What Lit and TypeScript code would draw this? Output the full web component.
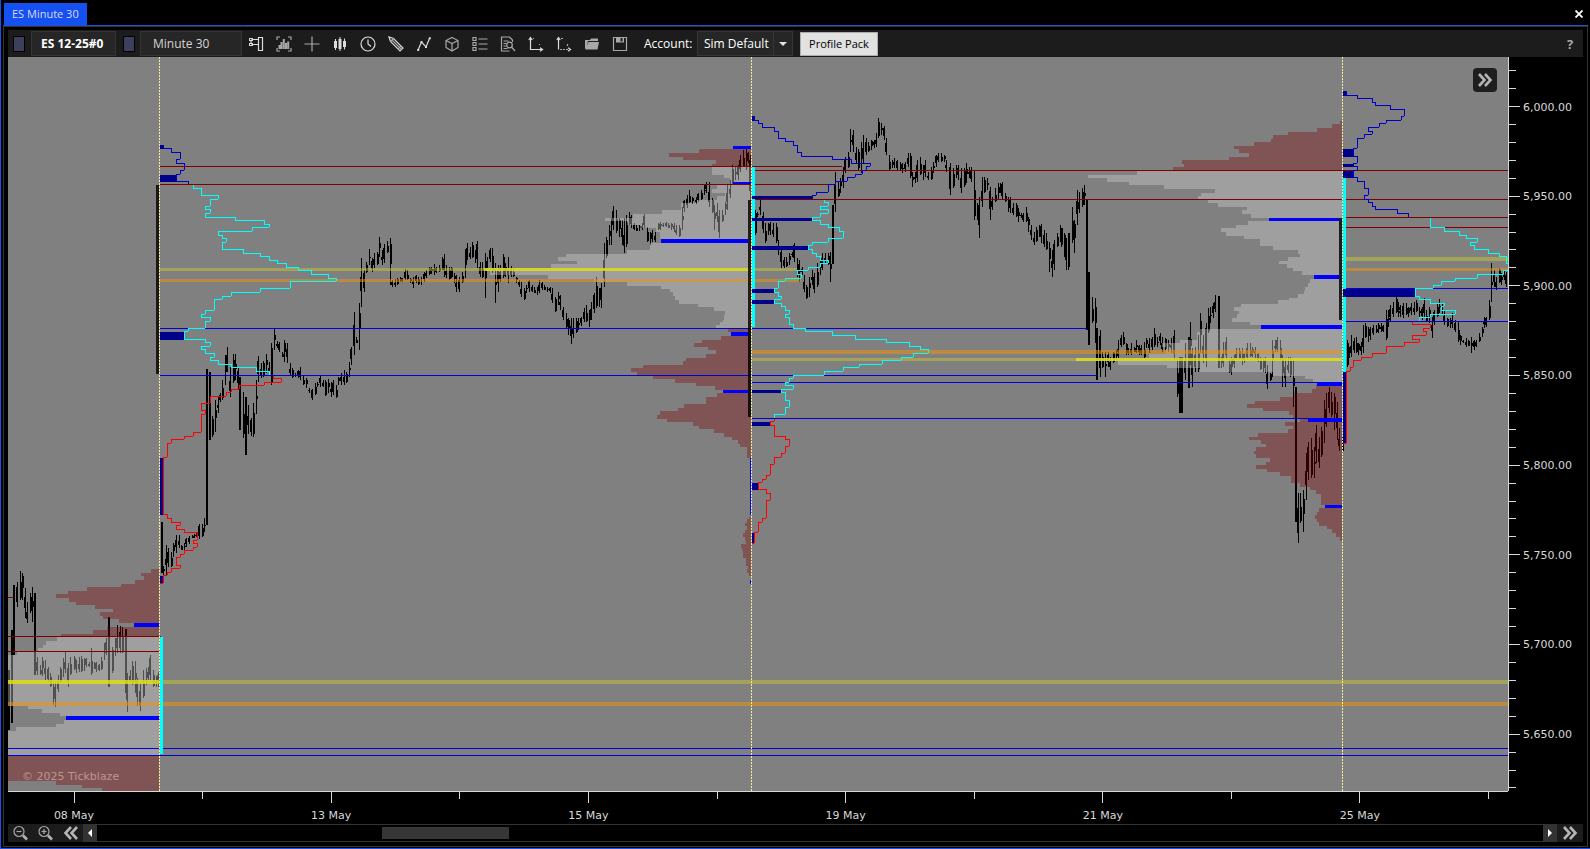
import { LitElement, html, svg, css } from "lit";
import { customElement } from "lit/decorators.js";

/* ---------- chart geometry ---------- */

// The plot is described in window units; traced series use thirds of a unit,
// relative to the origin of their own session block.
const PLOT = { x: 8, y: 57, w: 1500, h: 734 };
const priceY = (p: number) => 106.5 + (6000 - p) * 1.7933;

type Rect = [number, number, number, number];
type Trace = { x: number; y: number; d: string };
type Bars = { x: number; y: number; d: string };

const BARS: Bars[] = [
  { x: 0, y: 550, d: "25,360,540 35,240,520 43,105,315 51,95,170 60,63,150 67,70,150 75,115,205 82,155,220 90,130,190 97,110,215 105,130,375 112,320,375 120,345,375 128,320,378 137,330,390 145,350,395 152,370,410 160,395,465 167,395,470 175,375,425 182,350,400 190,325,380 197,305,370 205,340,410 212,320,375 222,318,360 229,330,370 237,320,365 245,318,365 252,325,362 260,325,350 268,335,350 275,295,375 283,335,358 290,335,365 298,342,362 305,320,360 313,280,330 320,265,315 328,200,412 337,290,368 345,265,318 353,225,310 360,228,310 368,232,310 376,237,430 382,370,485 390,360,395 397,333,405 405,333,430 413,385,468 421,400,482 430,360,445 438,355,405 445,350,390 452,315,390 460,360,412 468,378,412 476,365,410" },
  { x: 150, y: 330, d: "33,575,728 41,708,735 49,645,735 56,655,712 64,665,710 71,640,680 79,615,670 87,615,655 95,645,660 102,640,660 110,625,650 118,618,642 126,615,625 133,612,625 140,608,622 148,582,628 156,582,622 164,565,605 171,117,585 180,125,330 187,258,322 196,210,305 204,200,250 212,190,215 218,150,210 225,75,165 232,50,125 241,110,200 249,72,160 257,72,150 265,115,180 272,140,300 280,185,325 287,200,375 295,225,312 303,265,318 311,220,320 318,150,252 326,78,155 334,100,145 341,92,140 349,72,130 357,95,135" },
  { x: 150, y: 130, d: "365,640,765 373,595,660 381,632,655 388,635,665 396,665,680 404,630,695 412,640,700 420,698,735 428,715,745 436,730,740 444,720,745 452,710,750 460,737,765 470,745,775 478,775,790 487,778,810 495,760,795 503,755,770 511,735,770 519,750,770 527,750,798 535,748,790 543,755,800 551,750,795 559,765,803 566,740,765 574,730,765 582,720,765 590,725,760 598,695,740 604,650,705 613,545,675 620,620,640 628,520,660 635,385,532 643,420,485 650,395,430 658,357,405 666,385,425 674,370,415 682,365,405 688,320,380 696,360,405 704,342,400 712,332,370 720,325,465 728,450,470 735,447,470 743,445,465 750,440,455 758,445,455 765,418,450 773,420,450 781,445,460 790,440,475 798,435,460 806,440,465 814,440,465 822,425,455 830,420,445 838,410,435 845,410,432 852,402,435 860,410,430 868,405,425 876,380,420 883,373,440 890,405,445 898,410,450" },
  { x: 450, y: 130, d: "5,410,445 13,430,460 20,435,485 28,440,485 36,425,458 45,358,445 52,340,390 60,350,388 67,337,385 75,360,400 82,333,415 90,395,440 98,395,445 106,368,505 113,380,415 121,355,395 128,355,430 136,400,520 144,405,485 152,405,455 160,372,445 167,400,440 175,380,460 183,408,440 191,415,440 200,440,458 208,450,470 215,455,500 222,475,510 230,465,490 238,450,485 247,465,485 254,470,490 261,470,495 268,450,490 276,455,480 284,465,480 292,470,485 300,470,490 308,475,520 316,500,545 324,487,525 332,495,540 340,530,570 348,550,595 356,565,615 363,565,643 370,565,625 378,565,610 386,565,600 394,560,588 402,535,575 410,525,575 418,540,590 425,515,570 433,490,550 440,440,535 448,475,530 455,460,535 463,340,470 470,320,385 478,285,345 484,265,345 491,228,300 500,240,310 508,265,320 516,270,345 524,265,370 530,255,350 537,245,285 545,255,295 553,280,300 560,285,302 568,285,302 576,280,300 584,253,295 592,290,335 600,305,345 608,300,335 616,305,335 624,280,300 632,275,300 640,278,290 648,276,292 656,278,295 664,280,300 672,280,305 680,285,315 688,285,322 696,230,300 704,210,245 712,195,235 718,180,218 728,200,222 738,200,222 746,190,215 754,180,210 762,165,195 770,157,190 778,157,230 786,205,250 794,225,300 802,220,275 809,240,325 817,240,275 825,215,255 833,165,240 841,150,205 848,105,165 856,110,150 864,105,150 872,75,125 880,60,110 888,58,120 894,65,100 900,75,210" },
  { x: 740, y: 100, d: "45,330,405 53,335,350 61,300,345 69,335,400 77,370,430 84,370,405 92,365,405 100,370,410 108,370,430 116,420,465 124,450,505 132,470,505 140,470,500 148,460,495 156,455,470 163,430,485 171,475,530 179,480,545 186,500,525 193,525,575 200,555,597 208,530,590 216,510,555 224,520,580 232,490,560 240,480,525 248,460,510 256,458,490 264,458,495 272,455,545 280,315,492 287,215,335 294,245,290 302,235,280 309,200,265 316,170,220 324,155,205 332,88,155 340,90,155 348,140,190 355,148,210 363,125,220 370,105,190 378,115,165 386,125,155 394,120,150 402,120,145 409,100,140 416,55,115 424,70,105 432,78,120 440,115,165 448,165,210 456,180,205 464,175,205 472,180,210 480,185,210 488,190,220 496,185,215 504,158,200 510,160,235 517,215,260 525,215,250 533,180,245 541,170,225 549,195,240 557,180,230 565,215,240 573,200,240 580,185,220 588,165,200 596,160,185 604,158,185 612,165,185 620,180,215 631,190,285 640,205,265 648,195,235 656,195,240 664,205,280 672,205,260 680,190,250 687,200,235 695,200,245 703,210,360 711,310,360 718,290,413 726,230,320 734,230,280 742,235,270 750,260,360 758,290,330 766,265,305 774,250,300 781,250,280 788,245,300 796,280,305 804,290,335 812,290,340 820,310,345 828,310,350 836,325,365 843,338,355 850,340,365 858,320,365 866,350,395 874,375,420 882,395,435 890,380,425 898,375,410 904,372,430 912,390,440 920,400,450 928,425,515 936,450,530 944,420,510 952,400,440 960,375,425 968,385,430 976,405,460 984,400,510" },
  { x: 1060, y: 110, d: "5,355,410 13,370,440 20,385,480 28,370,450 36,290,400 43,330,430 51,240,345 59,245,310 67,235,290 74,225,285 81,270,660 89,485,705 97,560,640 105,565,700 113,655,810 121,660,800 128,725,775 136,725,800 144,725,770 152,740,780 160,725,760 168,720,750 175,690,745 183,675,710 190,665,705 198,700,735 206,715,735 214,700,735 222,710,725 230,690,730 238,705,735 245,705,735 253,695,745 260,685,715 268,685,730 276,680,720 284,655,710 292,680,710 300,670,705 308,680,725 316,685,720 325,690,725 335,685,730 343,660,750 351,745,860 359,740,910 368,740,908 376,700,810 384,680,835 391,635,765 398,715,830 406,710,785 414,675,785 421,610,730 430,675,760 438,640,770 445,595,670 452,590,640 460,580,625 467,555,605 476,558,775 484,740,775 491,695,770 499,680,750 507,745,790 514,740,795 522,735,775 530,715,750 538,715,750 546,715,765 554,730,760 562,698,750 570,700,740 578,710,740 586,710,745 594,730,755 602,740,780 610,745,785 617,740,790 623,765,838 630,790,812 638,690,800 646,690,725 652,680,725 660,690,750 668,735,832 676,745,830 684,740,790 692,740,800 700,750,890 708,830,1235 715,1150,1298 722,1150,1240 730,1140,1265 738,1030,1170 746,995,1110 754,985,1105 762,1010,1105 770,945,1060 777,980,1075 785,950,1040 792,870,1000 800,850,950 808,830,910 815,845,920 823,850,960 831,875,990 838,955,1022 847,980,1025" },
  { x: 1330, y: 80, d: "52,780,860 58,800,835 65,765,830 72,775,820 79,770,820 86,790,825 93,785,825 100,735,820 107,730,775 115,740,785 122,740,780 130,735,765 138,735,760 146,730,760 153,730,755 160,735,755 168,690,780 175,690,740 182,675,725 190,665,710 198,650,700 205,665,710 212,675,710 220,670,715 228,670,705 236,680,710 244,670,705 252,665,705 260,660,695 268,680,710 276,680,720 283,655,710 290,690,725 298,680,730 306,710,775 314,690,735 322,670,710 328,658,700 336,670,705 344,690,735 352,715,740 360,715,745 368,700,745 376,720,755 384,725,785 392,765,795 400,780,790 408,775,800 415,780,798 424,770,820 432,780,810 440,780,800 448,760,785 456,740,770 462,710,745 470,710,740 477,660,720 485,550,665 492,570,620 500,590,630 507,565,610 515,580,615 522,570,600 530,575,620" },
];

const VALUE_AREAS: Trace[] = [
  { x: 0, y: 550, d: "M477,259H171V273H138V285H129V294H114V304H50V315H24V469H84V478H126V489H180V498H198V510H192V522H168V531H48V543H24V616H477Z" },
  { x: 450, y: 130, d: "M903,109H786V135H822V144H840V162H802V177H786V189H825V198H802V210H740V219H694V240H636V252H549V264H465V273H532V285H570V294H618V306H630V327H633V339H600V360H532V372H349V381H324V393H381V402H303V414H103V423H120V435H294V447H432V457H532V468H633V477H660V486H669V498H675V510H687V522H744V531H792V543H825V555H822V570H818V576H810V585H798V595H903Z" },
  { x: 1060, y: 110, d: "M846,181H231V195H84V204H141V216H207V225H312V237H465V248H423V258H414V267H444V279H474V291H561V300H546V312H573V324H627V333H564V345H528V354H483V366H498V378H552V387H600V408H639V420H714V432H720V441H684V453H657V462H681V474H699V483H726V495H762V507H750V519H744V531H735V543H732V552H714V564H687V570H654V582H543V591H522V603H537V612H531V624H516V636H570V645H603V657H420V667H411V690H360V699H306V712H318V732H267V744H48V753H174V765H321V774H420V786H639V798H735V807H759V817H846Z" },
];

const TAILS: Trace[] = [
  { x: 0, y: 550, d: "M477,57H453V69H423V78H432V90H405V102H363V111H261V123H204V132H168V144H207V156H228V165H285V177H339V186H300V198H309V207H357V219H402V231H321V240H279V252H183V259H477ZM24,616H477V722H306V714H246V705H168V693H24Z" },
  { x: 450, y: 130, d: "M903,57H747V69H657V81H699V90H799V102H786V109H903ZM903,595H834V606H843V618H813V630H756V640H732V651H774V660H798V672H768V684H708V693H699V705H579V714H543V726H561V736H609V747H675V759H738V768H796V780H819V789H801V801H768V822H702V834H684V843H630V855H621V867H651V876H729V888H747V897H792V909H822V921H846V930H864V942H870V951H891V984H903Z" },
  { x: 740, y: 330, d: "M33,560H27V568H21V579H15V588H21V600H15V609H9V621H15V632H18V642H3V653H6V664H9V684H18V708H24V717H21V729H27V738H33Z" },
  { x: 1060, y: 110, d: "M846,33H840V42H816V54H771V66H684V76H639V88H633V96H582V108H522V117H537V129H567V141H507V150H366V162H372V171H339V181H846ZM846,826H768V838H756V849H702V861H660V874H585V882H561V894H609V903H687V915H699V926H720V936H675V947H699V957H684V969H594V981H567V990H603V1002H618V1011H588V1023H582V1032H588V1044H630V1056H618V1065H588V1077H621V1086H660V1098H693V1118H720V1130H750V1140H768V1152H783V1185H795V1194H777V1206H771V1215H765V1226H771V1236H777V1247H801V1257H816V1269H828V1281H840V1293H846Z" },
];

const UPPER: Trace[] = [
  { x: 150, y: 130, d: "M42,45V55H64V67H91V88H79V100H103V121H91V133H79V154H115V163" },
  { x: 740, y: 100, d: "M43,48V61H55V70H67V82H103V94H115V115H136V124H160V136H172V157H184V169H277V178H334V190H391V199H379V211H367V223H346V232H322V244H286V253H265V277H229V286H217V298" },
  { x: 1330, y: 80, d: "M50,33V46H82V55H127V67H136V76H181V88H223V109H214V121H169V130H148V142H115V154H127V163H103V175H82V205H71V229H82V250H71V259H82V271H71V292H82V304H103V325H115V346H103V358H115V367H127V379H136V388H202V400H235V411" },
];

const MIDDLE: Trace[] = [
  { x: 150, y: 130, d: "M130,165V175H154V196H205V208H181V229H166V238H181V250H166V262H256V271H343V283H358V292H307V304H205V316H217V325H229V337H217V358H280V370H331V379H358V391H382V400H409V412H445V421H484V433H535V445H559V454H421V475H331V487H244V499H217V508H193V541H166V553H154V562H181V574H166V595H115V604H103V628H166V637H181V649H154V658H166V670H193V682H181V691H205V703H244V712H319V724H358V736" },
  { x: 740, y: 100, d: "M253,300V307H265V319H241V328H265V340H241V352H217V361H241V373H265V382H298V394H310V415H265V427H217V436H205V448H217V460H229V469H241V481H265V490H241V502H205V511H172V523H184V535H136V544H115V565H103V577H115V589H124V598H103V610H124V619H136V631H148V643H136V652H148V673H160V685H196V694H277V706H346V718H439V727H508V739H541V748H565V760H520V772H484V781H427V793H358V802H310V814H253V826H160V835H148V847H136V856H160V868H124V877H136V901H148V922H136V943H103V955" },
  { x: 1330, y: 80, d: "M301,414V442H343V454H388V466H409V475H442V487H421V496H433V508H475V520H508V529H529V550H534M534,571H520V583H442V595H376V604H334V616H310V625H256V649H268V658H301V670H343V679H334V691H376V703H301V712H268V723" },
];

const LOWER: Trace[] = [
  { x: 150, y: 330, d: "M370,138V145H394V157H343V166H268V178H244V187H229V199H181V220H154V241H166V253H154V307H130V319H103V328H64V340H52V382H40V553H52V565H64V577H91V586H79V598H103V607H142V631H130V640H142V652H130V661H103V673H91V682H79V706H91V715H64V727H52V736H40V760H30" },
  { x: 740, y: 330, d: "M103,267V274H91V286H103V319H136V328H148V349H136V370H124V382H103V403H91V436H79V448H67V457H55V478H79V490H91V511H79V565H67V577H55V607H43V640H36" },
  { x: 1330, y: 80, d: "M247,726V733H301V745H280V754H289V766H247V778H268V787H223V799H169V820H127V832H94V841H70V862H61V874H49V1090H38" },
];

// x1, y1, x2, y2
const HIGH_LINES: Rect[] = [
  [159, 166, 842, 167], [159, 184, 836, 185], [752, 170, 1508, 171], [752, 199, 1508, 200],
  [1343, 217, 1508, 218], [1343, 227, 1508, 228], [8, 597, 13, 598], [8, 636, 161, 637], [8, 651, 161, 652],
];
const LOW_LINES: Rect[] = [
  [8, 748, 1508, 749], [8, 755, 1508, 756], [159, 328, 1087, 329], [159, 375, 1097, 376],
  [752, 382, 1342, 383], [752, 418, 1342, 419], [1343, 288, 1508, 289], [1343, 321, 1508, 322],
];
const POC_LINES: Rect[] = [[159, 680, 1508, 684], [159, 268, 484, 271], [751, 268, 797, 271], [752, 358, 1076, 361], [1343, 257, 1508, 261]];
const POC_BARS: Rect[] = [[8, 680, 159, 684], [484, 268, 748, 271], [1076, 358, 1342, 361]];
const VWAP_LINES: Rect[] = [[8, 702, 1508, 706], [159, 279, 801, 282], [752, 350, 1342, 354], [1343, 268, 1508, 271]];
const NODES: Rect[] = [
  [134, 623, 159, 627], [66, 716, 159, 720], [733, 146, 751, 149], [733, 182, 751, 184], [661, 239, 748, 243],
  [731, 332, 748, 336], [723, 390, 748, 393], [750, 458, 751, 515], [750, 580, 751, 584], [1269, 218, 1339, 221],
  [1314, 275, 1339, 279], [1261, 325, 1342, 329], [1317, 382, 1342, 386], [1308, 418, 1342, 422], [1325, 505, 1342, 508],
];
const DARK_NODES: Rect[] = [
  [160, 145, 164, 149], [160, 175, 176, 182], [160, 332, 184, 340], [160, 458, 163, 515], [160, 576, 163, 583],
  [752, 116, 755, 121], [752, 196, 813, 199], [752, 218, 812, 221], [752, 246, 808, 250], [752, 289, 774, 293],
  [752, 300, 774, 304], [752, 390, 781, 393], [752, 422, 770, 426], [752, 483, 758, 490], [752, 533, 754, 543],
  [1343, 91, 1347, 96], [1343, 149, 1354, 157], [1343, 164, 1354, 167], [1343, 171, 1354, 178], [1343, 289, 1415, 297],
  [1343, 372, 1346, 443],
];
const CYAN_BARS: Rect[] = [[160, 637, 163, 754], [752, 167, 755, 327], [1343, 178, 1346, 372]];
const RANGE_BARS: Rect[] = [[156, 185, 159, 374], [748, 200, 751, 417], [1339, 218, 1342, 320]];
const SESSIONS = [159, 751, 1342];

const rects = (list: Rect[], cls: string) =>
  svg`<path class=${cls} d=${list.map(([a, b, c, d]) => `M${a},${b}H${c}V${d}H${a}Z`).join("")} />`;

const traces = (list: Trace[], cls: string) =>
  list.map((t) => svg`<path class=${cls} transform="translate(${t.x} ${t.y}) scale(0.33333)" d=${t.d} />`);

function barPath(group: Bars): string {
  return group.d
    .split(" ")
    .map((item, i) => {
      const [bx, hi, lo] = item.split(",").map(Number);
      const x = Math.floor(group.x + bx / 3);
      const top = Math.round(group.y + hi / 3);
      const bottom = Math.round(group.y + lo / 3);
      const size = bottom - top;
      const tall = size > 50;
      const head = tall ? 0 : 0.12 + ((i * 7) % 5) * 0.09;
      const tail = tall ? 0 : 0.08 + ((i * 3) % 4) * 0.12;
      const b1 = Math.round(top + size * head);
      const b2 = Math.round(bottom - size * tail);
      return `M${x},${top}h1V${bottom}h-1ZM${x - ((i >> 1) % 2)},${b1}h2V${b2}h-2Z`;
    })
    .join("");
}

/* ---------- icons ---------- */

const icon = (body: unknown, size = 16) =>
  html`<svg class="icon" width=${size} height=${size} viewBox="0 0 16 16" aria-hidden="true">${body}</svg>`;

const TOOLS: Array<[string, unknown]> = [
  ["Chart trader", svg`<path class="s w" d="M10.500 1.500h4v13h-4zM4.500 3.500h6M4.500 8.500h6M3 5v2"/><path class="f w" d="M1 2h4v3H1zM1 7h4v3H1z"/><path class="k" d="M2 3h1.500v1H2zM2 8h1.500v1H2z"/>`],
  ["Indicators", svg`<path class="s" d="M1 4V1h3M12 1h3v3M1 12v3h3M12 15h3v-3"/><path class="f" d="M2.500 9h2v4h-2zM4.500 6h2v7h-2zM6.800 3h2v10h-2zM9 7h2v6H9zM11.200 5.500h2V13h-2z"/>`],
  ["Crosshair", svg`<path class="s" d="M8 .5v15M.5 8h15"/>`],
  ["Chart style", svg`<path class="f w" d="M2 5h3v7H2zM6.500 3h3v10h-3zM11 5h3v6h-3zM3 3h1v11H3zM7.500 1h1v14h-1zM12 2.500h1v11h-1z"/>`],
  ["Time", svg`<circle class="s w" cx="8" cy="8" r="7"/><path class="s w" d="M8 3.500V8l3 2.500"/>`],
  ["Drawing tools", svg`<path class="s w" d="M1 1l1.500 4.500L12 15l3-3-9.500-9.500z"/><path class="s" d="M2.500 5.500l3-3M4 4l9.500 9.500M10 13l3-3"/>`],
  ["Strategies", svg`<path class="s w" d="M2 14l3.500-8 4.500 5 3.500-8.500"/><path class="f w" d="M1.200 13h2v2h-2zM4.500 5h2v2h-2zM9 10h2v2H9zM12.800 1.200h2v2h-2z"/>`],
  ["Objects", svg`<path class="s" d="M8 1.500l6 3v7l-6 3.500-6-3.500v-7zM2 4.500l6 3 6-3M8 7.500V15"/>`],
  ["Data list", svg`<path class="s" d="M1 1.500h3v3H1zM1 6.500h3v3H1zM1 11.500h3v3H1zM6.500 3h9M6.500 8h9M6.500 13h9"/>`],
  ["Find", svg`<path class="s" d="M12.500 6V4l-3-3H1.500v14h8M3.500 5h5M3.500 7.500h3M3.500 10h3M3.500 12.500h4"/><circle class="s" cx="9.500" cy="9" r="2.800"/><path class="s" stroke-width="2" d="M11.500 11l3.500 4"/>`],
  ["Scale up", svg`<path class="s w" d="M2.500 2v11.500H14M.8 4l1.700-2.500L4.200 4M12 11.800l2.500 1.700-2.500 1.700"/><path class="s" stroke-dasharray="1 2" d="M5 2.500h3M11.500 8v3"/>`],
  ["Scale down", svg`<path class="s w" d="M2.500 2v11.500M.8 4l1.700-2.500L4.200 4M12 11.800l2.500 1.700-2.500 1.700"/><path class="s" stroke-dasharray="2 1" d="M4 13.500h9M5 2.500h3M11.500 8v3"/>`],
  ["Open", svg`<path class="f" d="M1 13V4h5l1-1.500h7V5H4L2.500 12zM4.500 6H15l-1.500 7.500h-12z"/>`],
  ["Save", svg`<path class="s" d="M1.500 1.500h13v13h-13z"/><path class="f" d="M4 1.500h8v5H4z"/><path class="k" d="M8.500 2h2v3.500h-2z"/>`],
];

const chevrons = (left = false) =>
  icon(svg`<path class="c" d=${left ? "M8 2L2.500 8 8 14M14 2L8.500 8l5.500 6" : "M2 2l5.500 6L2 14M8 2l5.500 6L8 14"} />`);

const PRICES = Array.from({ length: 41 }, (_, i) => 6020 - i * 10);
const DATES = ["08 May", "", "13 May", "", "15 May", "", "19 May", "", "21 May", "", "25 May", ""];

/* ---------- components ---------- */

const iconStyles = css`
  .icon { display: block; flex: none; }
  .s { fill: none; stroke: #a8a8a8; stroke-width: 1.2; }
  .f { fill: #a8a8a8; }
  .s.w { stroke: #dcdcdc; }
  .f.w { fill: #dcdcdc; }
  .k { fill: #1c1c1c; }
  .c { fill: none; stroke: #b4b4b4; stroke-width: 2.6; }
  button { font: inherit; margin: 0; padding: 0; border: 0; border-radius: 0; background: none; color: inherit; display: flex; align-items: center; justify-content: center; }
`;

@customElement("chart-toolbar")
export class ChartToolbar extends LitElement {
  static styles = [
    iconStyles,
    css`
      :host { display: flex; align-items: center; height: 27px; padding: 0 5px; box-sizing: border-box; background: #1c1c1c; color: #fff; font: 12px/16px "Open Sans", "Noto Sans", sans-serif; }
      .link { width: 12px; height: 16px; box-sizing: border-box; background: #3c405c; border: 1px solid #000; flex: none; }
      .field { height: 25px; box-sizing: border-box; margin: 0; border: 1px solid #353535; border-radius: 0; background: #262626; color: #fff; font: inherit; outline: none; }
      .symbol { width: 85px; margin: 0 7px 0 6px; padding: 0 9px; font-weight: 700; font-size: 12px; }
      .interval { width: 102px; margin-left: 5px; padding: 0 12px; font-size: 12px; color: #d4d4d4; }
      .tools { display: flex; }
      .tool { width: 28px; height: 27px; }
      .account { margin-left: 10px; width: 53px; }
      .combo { position: relative; display: flex; }
      .select { width: 96px; padding: 0 20px 0 6px; appearance: none; }
      .drop { position: absolute; right: 0; top: 0; width: 20px; height: 25px; box-sizing: border-box; border: 1px solid #353535; display: flex; align-items: center; justify-content: center; pointer-events: none; }
      .pack { margin-left: 7px; width: 78px; height: 24px; background: #e1e1e1; border: 1px solid #adadad; color: #000; white-space: nowrap; font-size: 11px; }
      .help { margin-left: auto; width: 16px; font-weight: 700; font-size: 13px; color: #a8a8a8; }
    `,
  ];

  render() {
    return html`
      <button class="link" aria-label="Symbol link"></button>
      <input class="field symbol" aria-label="Symbol" .value=${"ES 12-25#0"} />
      <button class="link" aria-label="Interval link"></button>
      <input class="field interval" aria-label="Interval" .value=${"Minute 30"} />
      <div class="tools">
        ${TOOLS.map(([name, body]) => html`<button class="tool" aria-label=${name}>${icon(body)}</button>`)}
      </div>
      <label class="account" for="account">Account:</label>
      <div class="combo">
        <select class="field select" id="account"><option>Sim Default</option></select>
        <span class="drop"><svg width="8" height="4" viewBox="0 0 8 4"><path d="M0 0h8L4 4z" fill="#e4e4e4" /></svg></span>
      </div>
      <button class="pack">Profile Pack</button>
      <button class="help" aria-label="Help">?</button>
    `;
  }
}

@customElement("profile-chart")
export class ProfileChart extends LitElement {
  static styles = [
    iconStyles,
    css`
      :host { display: grid; grid-template-columns: minmax(0, 1fr) 75px; grid-template-rows: minmax(0, 1fr) 33px; min-height: 0; background: #000; font: 11px/16px "DejaVu Sans", sans-serif; }
      .plot { position: relative; background: #808080; min-height: 0; overflow: hidden; }
      .canvas { display: block; width: 100%; height: 100%; shape-rendering: crispEdges; }
      .bars { fill: #000; }
      .va { fill: rgba(211, 211, 211, 0.38); }
      .tail { fill: rgba(128, 0, 0, 0.34); }
      .high { fill: #800000; }
      .low { fill: #0000dc; }
      .poc { fill: rgba(196, 196, 48, 0.5); }
      .pocbar { fill: rgba(222, 222, 20, 0.85); }
      .vwap { fill: rgba(240, 146, 10, 0.52); }
      .node { fill: #0000ff; }
      .dark { fill: #00008b; }
      .cyan { fill: #00ffff; }
      .range { fill: rgba(0, 0, 0, 0.82); }
      .line { fill: none; stroke-width: 3; }
      .upper { stroke: #0000c8; }
      .middle { stroke: #00ffff; }
      .lower { stroke: #ff0000; }
      .session { stroke: #f5ec96; stroke-width: 1; stroke-dasharray: 2 1; }
      .mark { position: absolute; left: 14px; bottom: 6px; color: rgba(225, 190, 190, 0.62); }
      .jump { position: absolute; right: 11px; top: 11px; width: 24px; height: 24px; border-radius: 4px; background: #1e1e1e; }
      .axis { display: block; width: 100%; height: 100%; overflow: visible; fill: #d8d8d8; }
      .tick { stroke: #d8d8d8; stroke-width: 1; shape-rendering: crispEdges; }
      .date { text-anchor: middle; }
    `,
  ];

  render() {
    return html`
      <div class="plot">
        <svg class="canvas" viewBox="${PLOT.x} ${PLOT.y} ${PLOT.w} ${PLOT.h}" preserveAspectRatio="none" role="img" aria-label="ES volume profile chart">
          ${BARS.map((g) => svg`<path class="bars" d=${barPath(g)} />`)}
          ${rects(POC_LINES, "poc")}
          ${traces(TAILS, "tail")} ${traces(VALUE_AREAS, "va")}
          ${rects(VWAP_LINES, "vwap")}
          ${rects(POC_BARS, "pocbar")}
          ${rects(HIGH_LINES, "high")} ${rects(LOW_LINES, "low")}
          ${rects(NODES, "node")} ${rects(RANGE_BARS, "range")} ${rects(CYAN_BARS, "cyan")} ${rects(DARK_NODES, "dark")}
          ${traces(UPPER, "line upper")} ${traces(MIDDLE, "line middle")} ${traces(LOWER, "line lower")}
          ${SESSIONS.map((x) => svg`<line class="session" x1=${x + 0.5} x2=${x + 0.5} y1="57" y2="791" />`)}
        </svg>
        <span class="mark">© 2025 Tickblaze</span>
        <button class="jump" aria-label="Jump to latest">${chevrons()}</button>
      </div>
      <svg class="axis" aria-label="Price axis">
        <line class="tick" x1="0.5" x2="0.5" y1="0" y2="100%" />
        ${PRICES.map((p) => {
          const y = `${(((priceY(p) - PLOT.y) / PLOT.h) * 100).toFixed(3)}%`;
          const major = p % 50 === 0;
          return svg`<line class="tick" x1="1" x2=${major ? 12 : 8} y1=${y} y2=${y} />
            ${major ? svg`<text x="15" y=${y} dy="4">${p.toLocaleString("en-US", { minimumFractionDigits: 2 })}</text>` : null}`;
        })}
      </svg>
      <svg class="axis" aria-label="Time axis">
        <line class="tick" x1="0" x2="100%" y1="0.5" y2="0.5" />
        ${DATES.map((label, i) => {
          const x = `${(((66 + i * 128.6) / PLOT.w) * 100).toFixed(3)}%`;
          return svg`<line class="tick" x1=${x} x2=${x} y1="0" y2=${label ? 12 : 8} />
            ${label ? svg`<text class="date" x=${x} y="28">${label}</text>` : null}`;
        })}
      </svg>
    `;
  }
}

@customElement("chart-scroller")
export class ChartScroller extends LitElement {
  static styles = [
    iconStyles,
    css`
      :host { display: flex; height: 18px; background: #1c1c1c; }
      .zoom { width: 25px; }
      .arrow { width: 14px; background: #333; }
      .track { flex: 1; display: grid; grid-template-columns: 285fr 127fr 1034fr; align-items: center; box-sizing: border-box; background: #000; border: solid #333; border-width: 1px 0; }
      .thumb { grid-column: 2; height: 12px; background: #363636; }
      .end { width: 26px; }
    `,
  ];

  private lens(plus: boolean) {
    return icon(svg`<circle class="s" cx="6" cy="6.500" r="5"/><path class="s" d="M3.500 6.500h5"/>${plus ? svg`<path class="s" d="M6 4v5"/>` : null}<path class="c" d="M10 10.500l4 4"/>`);
  }

  render() {
    return html`
      <button class="zoom" aria-label="Zoom out">${this.lens(false)}</button>
      <button class="zoom" aria-label="Zoom in">${this.lens(true)}</button>
      <button class="zoom" aria-label="Scroll to start">${chevrons(true)}</button>
      <button class="arrow" aria-label="Scroll left"><svg width="4" height="8" viewBox="0 0 4 8"><path d="M4 0v8L0 4z" fill="#fff" /></svg></button>
      <div class="track"><div class="thumb"></div></div>
      <button class="arrow" aria-label="Scroll right"><svg width="4" height="8" viewBox="0 0 4 8"><path d="M0 0v8l4-4z" fill="#fff" /></svg></button>
      <button class="end" aria-label="Scroll to end">${chevrons()}</button>
    `;
  }
}

@customElement("app-root")
export class AppRoot extends LitElement {
  static styles = [
    iconStyles,
    css`
      :host { display: flex; flex-direction: column; height: 100vh; box-sizing: border-box; padding: 3px 2px 1px; background: #000; border: solid #1550f0; border-width: 0 0 1px 1px; font: 12px/16px "Open Sans", "Noto Sans", sans-serif; }
      .tabs { display: flex; justify-content: space-between; border-bottom: 1px solid #1f50d8; padding-left: 1px; }
      .tab { height: 22px; padding: 0 8px; background: #1550f0; color: #d4dcf4; font-size: 11px; white-space: nowrap; }
      .close { width: 18px; height: 22px; }
      .frame { flex: 1; min-height: 0; display: flex; flex-direction: column; border: 1px solid #333; padding: 3px 4px 4px; }
      .chart { flex: 1; }
    `,
  ];

  render() {
    return html`
      <header class="tabs">
        <button class="tab">ES Minute 30</button>
        <button class="close" aria-label="Close"><svg width="8" height="8" viewBox="0 0 8 8"><path d="M.5.5l7 7M7.500.5l-7 7" stroke="#fff" stroke-width="1.800" /></svg></button>
      </header>
      <main class="frame">
        <chart-toolbar></chart-toolbar>
        <profile-chart class="chart"></profile-chart>
        <chart-scroller></chart-scroller>
      </main>
    `;
  }
}
